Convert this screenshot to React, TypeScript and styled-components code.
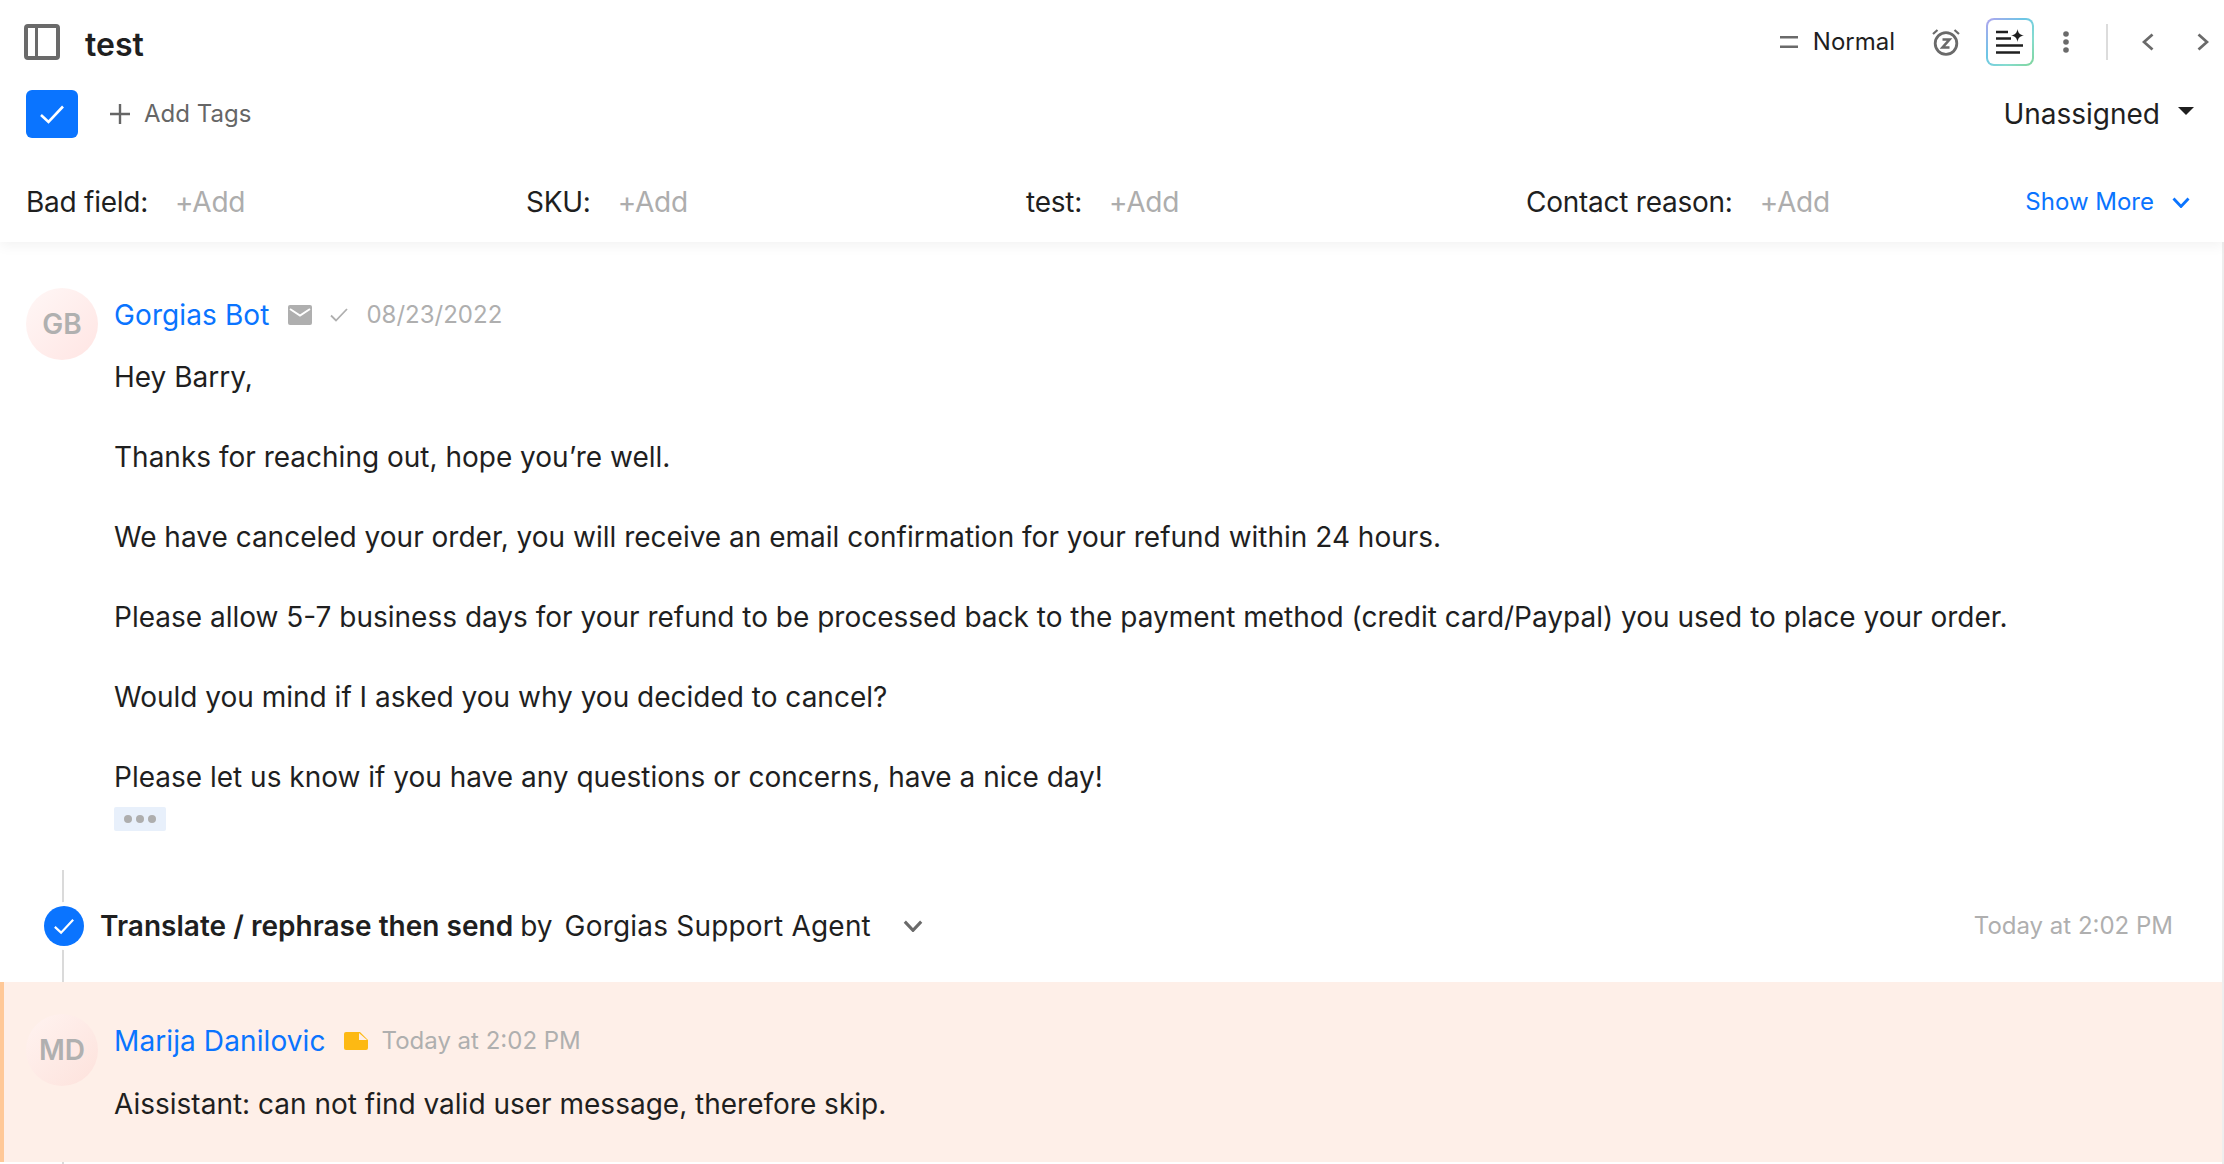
import React from "react";
import styled, { createGlobalStyle } from "styled-components";

const Global = createGlobalStyle`
  html, body { margin: 0; padding: 0; background: #fff; }
  body { font-family: "Inter", "Liberation Sans", sans-serif; color: #1f1f1f; font-size: 28px; overflow: hidden; }
  * { box-sizing: border-box; }
`;

const Page = styled.div`
  width: 2224px;
  height: 1164px;
  display: flex;
  flex-direction: column;
  overflow: hidden;
  background: #fff;
`;

const Header = styled.header`
  height: 242px;
  flex: none;
  padding: 0 24px 0 26px;
  display: flex;
  flex-direction: column;
  position: relative;
  z-index: 1;
  box-shadow: 0 4px 12px rgba(0, 0, 0, 0.05);
  background: #fff;
`;

const TopRow = styled.div`
  height: 84px;
  flex: none;
  display: flex;
  align-items: center;
  margin-left: -2px;
  margin-right: -9px;
`;

const Title = styled.h1`
  margin: 5px 0 0 25px;
  font-size: 32px;
  font-weight: 600;
  line-height: 40px;
  flex: 1;
`;

const PriorityLabel = styled.span`
  margin-left: 15px;
  font-size: 24px;
  line-height: 36px;
  color: #1f1f1f;
`;

const IconSlot = styled.span<{ $ml?: number }>`
  display: inline-flex;
  align-items: center;
  justify-content: center;
  flex: none;
  margin-left: ${(p) => p.$ml ?? 0}px;
`;

const AiButton = styled.button`
  width: 48px;
  height: 48px;
  margin: 0 0 0 26px;
  padding: 0;
  border: 2px solid transparent;
  border-radius: 8px;
  display: flex;
  align-items: center;
  justify-content: center;
  background:
    linear-gradient(#fff, #fff) padding-box,
    linear-gradient(135deg, #b3a4ef 0%, #6cc6e6 40%, #86dccf 70%, #7fd59a 100%) border-box;
`;

const Divider = styled.span`
  width: 2px;
  height: 36px;
  margin-left: 37px;
  background: #dcdcdc;
`;

const ToolsRow = styled.div`
  height: 52px;
  margin-top: 4px;
  flex: none;
  display: flex;
  align-items: center;
`;

const DoneButton = styled.button`
  width: 52px;
  height: 48px;
  padding: 0;
  border: none;
  border-radius: 6px;
  background: #0a74ff;
  display: flex;
  align-items: center;
  justify-content: center;
`;

const AddTags = styled.span`
  margin-left: 32px;
  display: flex;
  align-items: center;
  gap: 14px;
  font-size: 24px;
  line-height: 36px;
  color: #666;
  flex: 1;
`;

const Assignee = styled.span`
  display: flex;
  align-items: center;
  gap: 18px;
  font-size: 28px;
  line-height: 40px;
`;

const Caret = styled.span`
  width: 0;
  height: 0;
  margin: 0 6px 6px 0;
  border-left: 8px solid transparent;
  border-right: 8px solid transparent;
  border-top: 8px solid #1f1f1f;
`;

const FieldsRow = styled.div`
  margin-top: 40px;
  display: flex;
  align-items: center;
  justify-content: space-between;
  height: 44px;
`;

const FieldGrid = styled.div`
  display: grid;
  grid-template-columns: repeat(3, 500px) auto;
`;

const Field = styled.div`
  display: flex;
  gap: 27px;
  font-size: 28px;
  line-height: 40px;
  letter-spacing: -0.25px;
`;

const AddValue = styled.span`
  color: #adadad;
`;

const ShowMore = styled.span`
  display: flex;
  align-items: center;
  gap: 18px;
  font-size: 24px;
  line-height: 36px;
  color: #0a74ff;
  margin-right: 10px;
  white-space: nowrap;
`;

const Feed = styled.main`
  flex: 1;
  border-right: 2px solid #eeeeee;
  min-height: 0;
  display: flex;
  flex-direction: column;
  position: relative;
`;

const Message = styled.article`
  display: flex;
  gap: 16px;
  padding: 46px 0 0 26px;
  height: 628px;
  flex: none;
`;

const Avatar = styled.div<{ $onTint?: boolean }>`
  width: 72px;
  height: 72px;
  flex: none;
  border-radius: 50%;
  display: flex;
  align-items: center;
  justify-content: center;
  font-size: 28px;
  font-weight: 600;
  color: #b0b0b0;
  background: ${(p) =>
    p.$onTint
      ? "linear-gradient(135deg, #fff3f0 0%, #fde2dc 100%)"
      : "linear-gradient(135deg, #fff7f6 0%, #ffe5e3 100%)"};
`;

const MessageMain = styled.div`
  min-width: 0;
  flex: 1;
`;

const MetaRow = styled.div`
  display: flex;
  align-items: center;
  height: 40px;
  margin-top: 7px;
`;

const AuthorName = styled.span`
  color: #0a74ff;
  font-size: 28px;
  line-height: 40px;
  letter-spacing: 0.1px;
  margin-right: 18px;
`;

const Stamp = styled.span<{ $ml?: number }>`
  color: #afafaf;
  font-size: 24px;
  line-height: 36px;
  margin-left: ${(p) => p.$ml ?? 0}px;
`;

const BodyText = styled.div`
  margin-top: 22px;
  font-size: 28px;
  line-height: 40px;
  color: #1f1f1f;
  white-space: pre-line;
`;

const Paragraph = styled.p`
  margin: 0 0 40px;
  &:last-of-type { margin-bottom: 0; }
`;

const MoreDots = styled.div`
  width: 52px;
  height: 24px;
  margin-top: 10px;
  border-radius: 2px;
  background: #e8f0fb;
  display: flex;
  align-items: center;
  justify-content: center;
  gap: 4px;
`;

const Dot = styled.span`
  width: 8px;
  height: 8px;
  border-radius: 50%;
  background: #aeaeae;
`;

const ActionRow = styled.section`
  position: relative;
  height: 112px;
  flex: none;
  display: flex;
  align-items: center;
  padding: 0 49px 0 44px;
  &::before {
    content: "";
    position: absolute;
    left: 62px;
    top: 0;
    bottom: 0;
    width: 2px;
    background: #dadada;
  }
`;

const ActionBadge = styled.span`
  position: relative;
  width: 40px;
  height: 40px;
  flex: none;
  border-radius: 50%;
  background: #0a74ff;
  box-shadow: 0 0 0 4px #fff;
  display: flex;
  align-items: center;
  justify-content: center;
`;

const ActionName = styled.strong`
  margin-left: 16px;
  font-weight: 600;
  font-size: 28px;
  line-height: 40px;
  letter-spacing: 0.02px;
`;

const ActionBy = styled.span`
  margin-left: 7px;
  font-size: 28px;
  line-height: 40px;
`;

const ActionAgent = styled.span`
  margin-left: 12px;
  font-size: 28px;
  line-height: 40px;
  letter-spacing: 0.2px;
  flex: none;
`;

const ActionTime = styled(Stamp)`
  margin-left: auto;
`;

const Note = styled.article`
  display: flex;
  gap: 16px;
  height: 180px;
  flex: none;
  padding: 32px 0 0 22px;
  background: #feefe8;
  border-left: 4px solid #ffc897;
`;

const NoteBody = styled(BodyText)`
  margin-top: 23px;
`;

const Tail = styled.div`
  flex: 1;
  width: 2px;
  margin-left: 62px;
  background: #dadada;
`;

const PanelIcon = () => (
  <svg width="36" height="36" viewBox="0 0 36 36" fill="none">
    <rect x="2" y="2" width="32" height="32" rx="2" stroke="#6a6a6a" strokeWidth="4" />
    <rect x="11" y="2" width="3" height="32" fill="#6a6a6a" />
  </svg>
);

const Check = ({ size = 24 }: { size?: number }) => (
  <svg width={size} height={size} viewBox="0 0 24 24" fill="none">
    <path d="M1 13l7.5 7L23 4.5" stroke="#fff" strokeWidth="2.6" />
  </svg>
);

const Plus = () => (
  <svg width="20" height="20" viewBox="0 0 20 20" fill="none">
    <path d="M10 0v20M0 10h20" stroke="#666" strokeWidth="2.4" />
  </svg>
);

const EqualIcon = () => (
  <svg width="18" height="12" viewBox="0 0 18 12" fill="none">
    <path d="M0 1.2h18M0 10.8h18" stroke="#6a6a6a" strokeWidth="2.4" />
  </svg>
);

const SnoozeIcon = () => (
  <svg width="28" height="28" viewBox="0 0 28 28" fill="none">
    <circle cx="14" cy="15.500" r="10.800" stroke="#6a6a6a" strokeWidth="2.800" />
    <path d="M1 6l4.500-4M27 6l-4.500-4" stroke="#6a6a6a" strokeWidth="2.200" />
    <path d="M10.500 11.500h7l-7 8h7" stroke="#6a6a6a" strokeWidth="2.600" />
  </svg>
);

const AiIcon = () => (
  <svg width="28" height="26" viewBox="0 0 28 26" fill="none">
    <path d="M0 3h12M0 9.500h15M0 16.500h27M0 23.500h24" stroke="#1f1f1f" strokeWidth="2.500" />
    <path d="M21.500 0c.6 4 2.400 5.800 6.500 6.500-4.100.7-5.900 2.500-6.500 6.500-.6-4-2.400-5.800-6.500-6.500 4.100-.7 5.900-2.500 6.500-6.500z" fill="#1f1f1f" />
  </svg>
);

const Kebab = () => (
  <svg width="6" height="22" viewBox="0 0 6 22" fill="#6a6a6a">
    <circle cx="3" cy="3" r="2.800" />
    <circle cx="3" cy="11" r="2.800" />
    <circle cx="3" cy="19" r="2.800" />
  </svg>
);

const Chevron = ({ dir, color = "#6a6a6a", w = 12, h = 18 }: { dir: "left" | "right" | "down"; color?: string; w?: number; h?: number }) => {
  const d =
    dir === "left"
      ? "M10.500 1.500L2 9l8.500 7.500"
      : dir === "right"
        ? "M1.500 1.500L10 9l-8.500 7.500"
        : "M1.500 1.500L9 9.500l7.500-8";
  return (
    <svg width={w} height={h} viewBox={dir === "down" ? "0 0 18 11" : "0 0 12 18"} fill="none">
      <path d={d} stroke={color} strokeWidth="2.800" />
    </svg>
  );
};

const MailIcon = () => (
  <svg width="24" height="20" viewBox="0 0 24 20">
    <rect width="24" height="20" rx="2" fill="#afafaf" />
    <path d="M2 4l10 6.500L22 4" stroke="#fff" strokeWidth="2" fill="none" />
  </svg>
);

const TinyCheck = () => (
  <svg width="18" height="14" viewBox="0 0 18 14" fill="none">
    <path d="M1 7.500l5 5L17 1" stroke="#afafaf" strokeWidth="1.800" />
  </svg>
);

const NoteIcon = () => (
  <svg width="24" height="18" viewBox="0 0 24 18">
    <path d="M2 0h14l8 8v8a2 2 0 0 1-2 2H2a2 2 0 0 1-2-2V2a2 2 0 0 1 2-2z" fill="#fdb913" />
    <path d="M15 1v7h8z" fill="#feefe8" />
  </svg>
);

const fields = ["Bad field:", "SKU:", "test:", "Contact reason:"];
const paragraphs = [
  "Hey Barry,",
  "Thanks for reaching out, hope you’re well.",
  "We have canceled your order, you will receive an email confirmation for your refund within 24 hours.",
  "Please allow 5-7 business days for your refund to be processed back to the payment method (credit card/Paypal) you used to place your order.",
  "Would you mind if I asked you why you decided to cancel?",
  "Please let us know if you have any questions or concerns, have a nice day!",
];

export default function App() {
  return (
    <Page>
      <Global />
      <Header>
        <TopRow>
          <PanelIcon />
          <Title>test</Title>
          <EqualIcon />
          <PriorityLabel>Normal</PriorityLabel>
          <IconSlot $ml={37}><SnoozeIcon /></IconSlot>
          <AiButton aria-label="AI"><AiIcon /></AiButton>
          <IconSlot $ml={29}><Kebab /></IconSlot>
          <Divider />
          <IconSlot $ml={34}><Chevron dir="left" /></IconSlot>
          <IconSlot $ml={43}><Chevron dir="right" /></IconSlot>
        </TopRow>
        <ToolsRow>
          <DoneButton aria-label="Close"><Check /></DoneButton>
          <AddTags><Plus />Add Tags</AddTags>
          <Assignee>Unassigned<Caret /></Assignee>
        </ToolsRow>
        <FieldsRow>
          <FieldGrid>
            {fields.map((f) => (
              <Field key={f}>
                <span>{f}</span>
                <AddValue>+Add</AddValue>
              </Field>
            ))}
          </FieldGrid>
          <ShowMore>Show More<Chevron dir="down" color="#0a74ff" w={18} h={11} /></ShowMore>
        </FieldsRow>
      </Header>
      <Feed>
        <Message>
          <Avatar>GB</Avatar>
          <MessageMain>
            <MetaRow>
              <AuthorName>Gorgias Bot</AuthorName>
              <IconSlot $ml={1}><MailIcon /></IconSlot>
              <IconSlot $ml={18}><TinyCheck /></IconSlot>
              <Stamp $ml={18}>08/23/2022</Stamp>
            </MetaRow>
            <BodyText>
              {paragraphs.map((p) => (
                <Paragraph key={p}>{p}</Paragraph>
              ))}
            </BodyText>
            <MoreDots><Dot /><Dot /><Dot /></MoreDots>
          </MessageMain>
        </Message>
        <ActionRow>
          <ActionBadge><Check size={20} /></ActionBadge>
          <ActionName>Translate / rephrase then send</ActionName>
          <ActionBy>by</ActionBy>
          <ActionAgent>Gorgias Support Agent</ActionAgent>
          <IconSlot $ml={32}><Chevron dir="down" w={20} h={12} /></IconSlot>
          <ActionTime>Today at 2:02 PM</ActionTime>
        </ActionRow>
        <Note>
          <Avatar $onTint>MD</Avatar>
          <MessageMain>
            <MetaRow>
              <AuthorName>Marija Danilovic</AuthorName>
              <NoteIcon />
              <Stamp $ml={14}>Today at 2:02 PM</Stamp>
            </MetaRow>
            <NoteBody>Aissistant: can not find valid user message, therefore skip.</NoteBody>
          </MessageMain>
        </Note>
        <Tail />
      </Feed>
    </Page>
  );
}
